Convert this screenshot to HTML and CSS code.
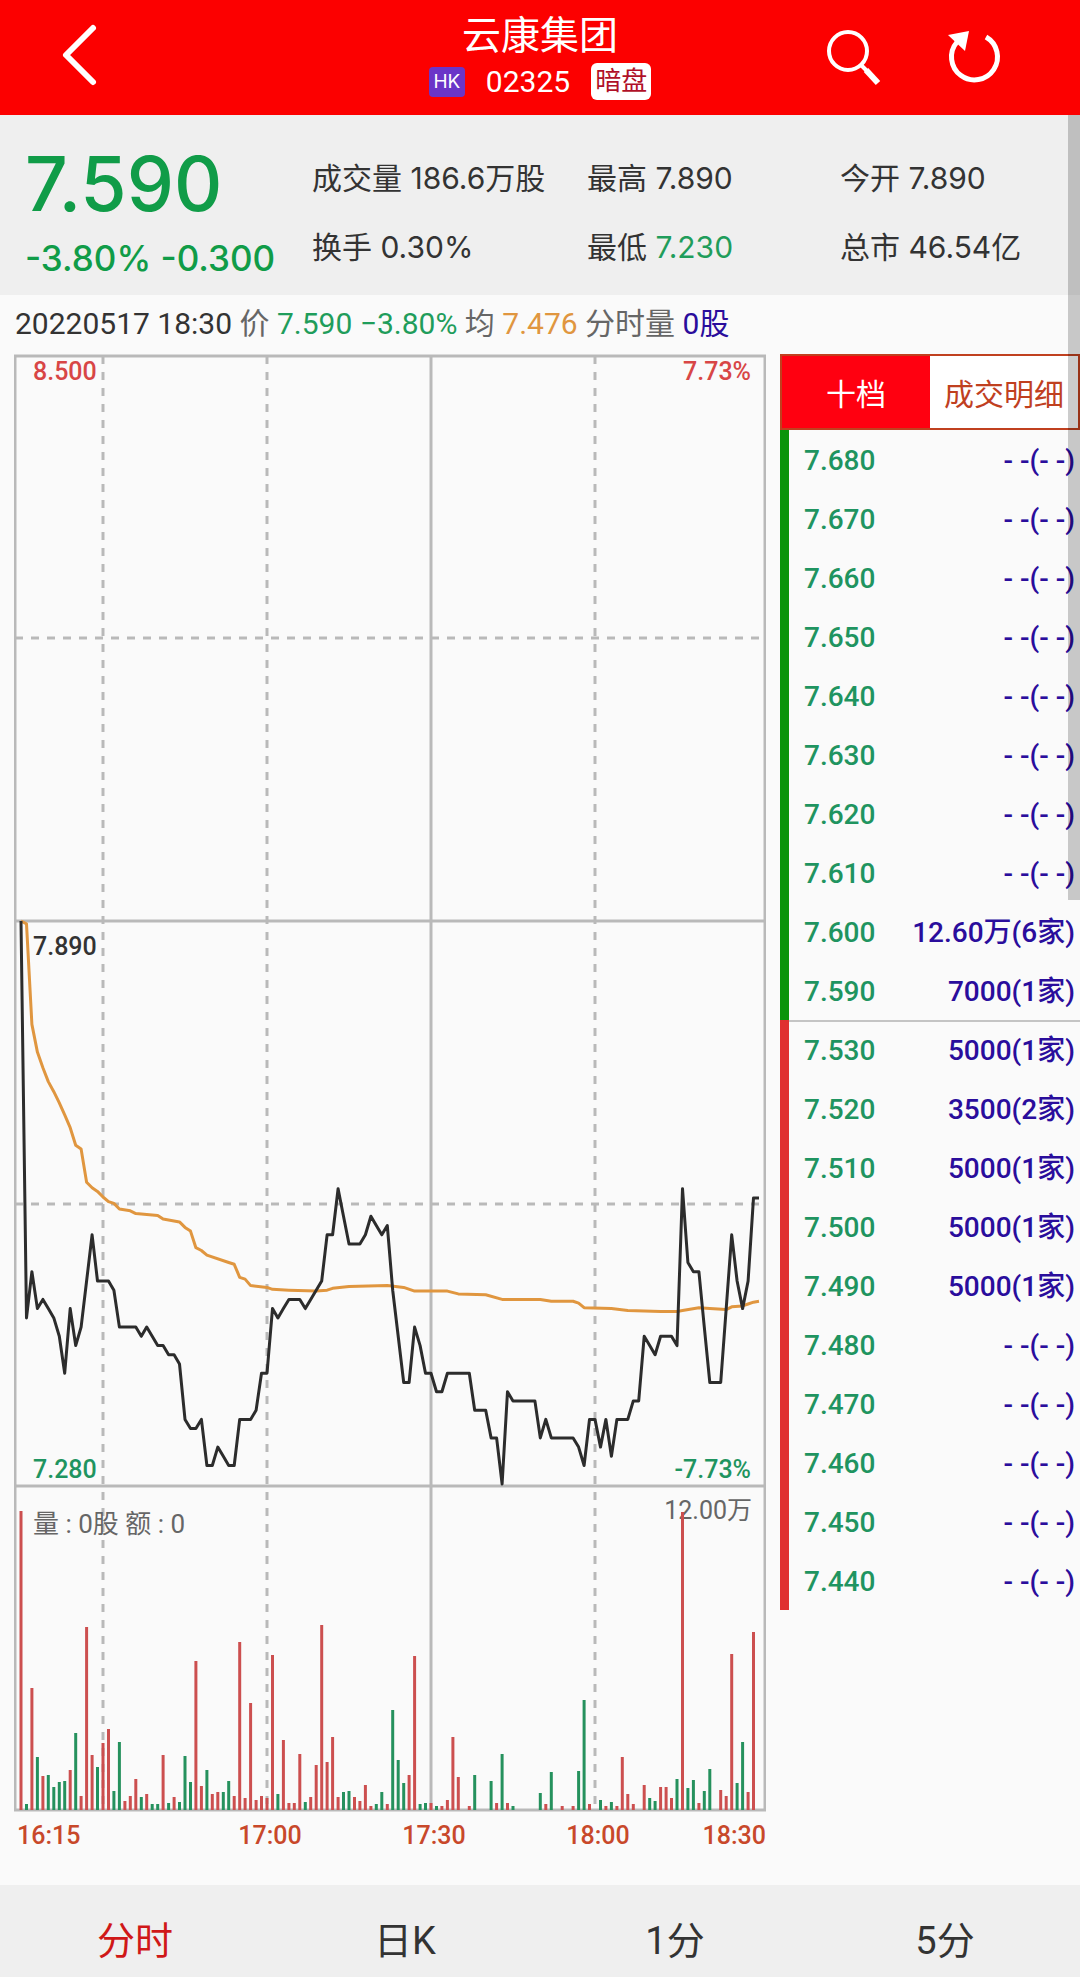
FILE: index.html
```html
<!DOCTYPE html>
<html lang="zh-CN">
<head>
    <meta charset="UTF-8">
    <meta name="viewport" content="width=device-width, initial-scale=1.0">
    <title>云康集团 02325</title>
    <link rel="stylesheet" href="styles.css">
</head>
<body>
    <header class="header">
        <button class="icon-btn" type="button" aria-label="返回">
            <svg width="40" height="72" viewBox="0 0 40 72">
                <path d="M33 6 L6 33 L33 60" fill="none" stroke="#fff" stroke-width="6" stroke-linecap="round" stroke-linejoin="round"/>
            </svg>
        </button>
        <div class="title">
            <h1>云康集团</h1>
            <div class="code-row">
                <span class="market">HK</span>
                <span class="code">02325</span>
                <span class="tag">暗盘</span>
            </div>
        </div>
        <div class="actions">
            <button class="icon-btn" type="button" aria-label="搜索">
                <svg width="60" height="60" viewBox="0 0 60 60">
                    <circle cx="25" cy="23" r="19" fill="none" stroke="#fff" stroke-width="4"/>
                    <path d="M38 37 L44 43" stroke="#fff" stroke-width="4"/>
                    <path d="M43 42 L55 55" stroke="#fff" stroke-width="6"/>
                </svg>
            </button>
            <button class="icon-btn" type="button" aria-label="刷新">
                <svg width="60" height="60" viewBox="0 0 60 60">
                    <path d="M41 9 A23 23 0 1 1 12 14" fill="none" stroke="#fff" stroke-width="5"/>
                    <path d="M3 7 L24 3 L20 23 Z" fill="#fff"/>
                </svg>
            </button>
        </div>
    </header>

    <main class="content">
        <div class="scroll-thumb"></div>

        <section class="summary">
            <div class="quote">
                <div class="price">7.590</div>
                <div class="change">-3.80% -0.300</div>
            </div>
            <div class="stats">
                <div>成交量 186.6万股</div>
                <div>最高 7.890</div>
                <div>今开 7.890</div>
                <div>换手 0.30%</div>
                <div>最低 <span class="green">7.230</span></div>
                <div>总市 46.54亿</div>
            </div>
        </section>

        <div class="info">
            20220517 18:30 <span class="gray">价</span> <span class="green">7.590 −3.80%</span> <span class="gray">均</span> <span class="orange">7.476</span> <span class="gray">分时量</span> <span class="blue">0股</span>
        </div>

        <div class="board">
            <svg class="chart" viewBox="0 0 752 1500">
                <g class="grid">
                    <path d="M1 2 H751 V1456 H1 Z M1 567 H751 M1 1132 H751 M417 2 V1456"/>
                    <path class="dash" d="M89 2 V1456 M253 2 V1456 M581 2 V1456 M1 284 H751 M1 850 H751"/>
                </g>
                <g class="label">
                    <text class="up" x="19" y="26">8.500</text>
                    <text class="up end" x="737" y="26">7.73%</text>
                    <text x="19" y="601">7.890</text>
                    <text class="down" x="19" y="1124">7.280</text>
                    <text class="down end" x="737" y="1124">-7.73%</text>
                    <text class="muted total" x="19" y="1179">量 : 0股 额 : 0</text>
                    <text class="muted end" x="738" y="1165">12.00万</text>
                </g>
                <g id="volume"></g>
                <polyline id="average" class="line average"/>
                <polyline id="price" class="line"/>
                <g class="label axis">
                    <text x="3" y="1490">16:15</text>
                    <text class="middle" x="256" y="1490">17:00</text>
                    <text class="middle" x="420" y="1490">17:30</text>
                    <text class="middle" x="584" y="1490">18:00</text>
                    <text class="end" x="752" y="1490">18:30</text>
                </g>
            </svg>

            <aside class="depth">
                <div class="tabs">
                    <button class="tab active" type="button">十档</button>
                    <button class="tab" type="button">成交明细</button>
                </div>
                <table class="orders">
                    <tbody class="sell">
                        <tr><td>7.680</td><td>- -(- -)</td></tr>
                        <tr><td>7.670</td><td>- -(- -)</td></tr>
                        <tr><td>7.660</td><td>- -(- -)</td></tr>
                        <tr><td>7.650</td><td>- -(- -)</td></tr>
                        <tr><td>7.640</td><td>- -(- -)</td></tr>
                        <tr><td>7.630</td><td>- -(- -)</td></tr>
                        <tr><td>7.620</td><td>- -(- -)</td></tr>
                        <tr><td>7.610</td><td>- -(- -)</td></tr>
                        <tr><td>7.600</td><td>12.60万(6家)</td></tr>
                        <tr><td>7.590</td><td>7000(1家)</td></tr>
                    </tbody>
                    <tbody class="buy">
                        <tr><td>7.530</td><td>5000(1家)</td></tr>
                        <tr><td>7.520</td><td>3500(2家)</td></tr>
                        <tr><td>7.510</td><td>5000(1家)</td></tr>
                        <tr><td>7.500</td><td>5000(1家)</td></tr>
                        <tr><td>7.490</td><td>5000(1家)</td></tr>
                        <tr><td>7.480</td><td>- -(- -)</td></tr>
                        <tr><td>7.470</td><td>- -(- -)</td></tr>
                        <tr><td>7.460</td><td>- -(- -)</td></tr>
                        <tr><td>7.450</td><td>- -(- -)</td></tr>
                        <tr><td>7.440</td><td>- -(- -)</td></tr>
                    </tbody>
                </table>
            </aside>
        </div>
    </main>

    <nav class="periods">
        <button class="period active" type="button">分时</button>
        <button class="period" type="button">日K</button>
        <button class="period" type="button">1分</button>
        <button class="period" type="button">5分</button>
    </nav>

    <script>
        // Ticks of 0.01 below 7.890, one per minute from 16:15
        const prices = [
            0, 43, 38, 42, 41, 42, 43, 45, 49, 42, 46, 44, 39, 34, 39, 39, 39, 40, 44, 44,
            44, 44, 45, 44, 45, 46, 46, 47, 47, 48, 54, 55, 55, 54, 59, 59, 57, 58, 59, 59,
            54, 54, 54, 53, 49, 49, 42, 43, 42, 41, 41, 41, 42, 41, 40, 39, 34, 34, 29, 32,
            35, 35, 35, 34, 32, 33, 34, 33, 40, 45, 50, 50, 44, 46, 49, 49, 51, 51, 49, 49,
            49, 49, 49, 53, 53, 53, 56, 56, 61, 51, 52, 52, 52, 52, 52, 56, 54, 56, 56, 56,
            56, 56, 57, 59, 54, 54, 57, 54, 58, 54, 54, 54, 52, 52, 45, 46, 47, 45, 45, 45,
            46, 29, 37, 38, 38, 44, 50, 50, 50, 42, 34, 39, 42, 39, 30, 30
        ];

        // [minute, ticks below 7.890]
        const averages = [
            [0, 0], [1, 0.3], [2, 11.2], [3, 14.2], [4, 15.9], [5, 17.4], [6, 18.5], [7, 19.7],
            [8, 21], [9, 22.4], [10, 24.3], [11, 24.7], [12, 28.3], [13, 28.9], [14, 29.3],
            [15, 29.9], [16, 30.4], [17, 30.6], [18, 31.2], [20, 31.4], [21, 31.7], [25, 31.9],
            [26, 32.3], [29, 32.6], [30, 33.2], [31, 33.6], [32, 35.4], [33, 35.7], [34, 36.2],
            [38, 37], [39, 37.2], [40, 38.6], [41, 38.8], [42, 39.5], [45, 39.7], [46, 39.9],
            [49, 40], [54, 40.1], [56, 40], [57, 39.8], [60, 39.6], [67, 39.5], [70, 39.7],
            [72, 40.1], [78, 40.1], [80, 40.4], [85, 40.5], [88, 41], [95, 41], [97, 41.2],
            [101, 41.2], [102, 41.4], [103, 41.9], [108, 42], [111, 42.2], [117, 42.3],
            [120, 42.3], [121, 42.2], [124, 41.9], [126, 42], [129, 42.1], [130, 41.8],
            [132, 41.7], [133, 41.5], [134, 41.3], [135, 41.2]
        ];

        // Bar heights: positive is red, negative is green
        const volumes = [
            299, -6, 122, -53, 34, -35, -23, -28, -29, 40, -77, 14, 183, 55, -43, 67, 81, -19, -68, 9,
            14, 31, -13, 16, -6, -6, 55, -7, 13, -8, -54, -28, 149, 24, -40, 16, 18, -18, -29, 14,
            168, 12, 107, 10, 14, 12, 155, -16, 70, 7, 7, 56, -8, 13, 45, 185, 48, 73, 13, -18,
            -19, 13, 9, 25, 4, -6, -18, 6, -100, -50, -27, 35, 154, -6, -7, 7, -4, 4, 10, 73,
            33, 0, 4, -35, 0, 0, -29, 7, -56, 7, -4, 0, 0, 0, 0, -17, 6, -38, 0, 4,
            0, 4, -39, -110, 6, 0, -10, 4, -8, 4, 53, 16, 6, 0, 25, -12, -9, 23, 23, 12,
            -31, 298, -22, -30, 7, -19, -41, 0, 20, 14, 156, -27, -68, 18, 178
        ];

        const toX = (minute) => 7 + minute * 738 / 135;
        const toY = (ticks) => 567 + ticks * 563 / 61;
        const toPoints = (list) => list.map(([m, t]) => `${toX(m).toFixed(1)},${toY(t).toFixed(1)}`).join(' ');

        document.getElementById('price').setAttribute('points', toPoints(prices.map((t, m) => [m, t])));
        document.getElementById('average').setAttribute('points', toPoints(averages));

        document.getElementById('volume').innerHTML = volumes.map((v, m) => {
            if (!v) return '';
            return `<path class="bar ${v > 0 ? 'rise' : 'fall'}" d="M${toX(m).toFixed(1)} 1456 v${-Math.abs(v)}"/>`;
        }).join('');
    </script>
</body>
</html>
```

FILE: styles.css
```css
* {
    box-sizing: border-box;
}

body {
    margin: 0;
    min-height: 100vh;
    display: flex;
    flex-direction: column;
    background: #fafafa;
    color: #333;
    font-family: Roboto, "Noto Sans CJK SC", sans-serif;
    font-size: 30px;
}

button {
    margin: 0;
    padding: 0;
    border: 0;
    background: none;
    color: inherit;
    font: inherit;
}

.green {
    color: #1f9d5b;
}

.gray {
    color: #666;
}

.orange {
    color: #e0963f;
}

.blue {
    color: #2a0d9c;
}

.header {
    height: 115px;
    padding: 0 60px;
    display: grid;
    grid-template-columns: 1fr auto 1fr;
    align-items: center;
    background: #fc0000;
    color: #fff;
}

.icon-btn {
    display: flex;
    justify-self: start;
}

.title {
    display: flex;
    flex-direction: column;
    align-items: center;
    gap: 6px;
}

.title h1 {
    margin: 0;
    font-size: 39px;
    font-weight: 400;
    line-height: 42px;
}

.code-row {
    display: flex;
    align-items: center;
    gap: 21px;
    line-height: 38px;
}

.market {
    width: 36px;
    border-radius: 4px;
    background: #6a35c8;
    font-family: Inter, sans-serif;
    font-size: 19px;
    line-height: 30px;
    text-align: center;
}

.tag {
    padding: 0 4px;
    border-radius: 6px;
    background: #fff;
    color: #b01028;
    font-size: 26px;
    line-height: 37px;
}

.actions {
    margin-right: 15px;
    display: flex;
    justify-content: flex-end;
    gap: 62px;
}

.content {
    position: relative;
    flex: 1;
}

.scroll-thumb {
    position: absolute;
    top: 0;
    right: 0;
    z-index: 1;
    width: 12px;
    height: 785px;
    background: rgba(0, 0, 0, 0.2);
}

.summary {
    height: 180px;
    padding: 0 36px 0 25px;
    display: flex;
    background: #efefef;
    font-family: Inter, "Noto Sans CJK SC", sans-serif;
}

.quote {
    width: 287px;
    padding-top: 27px;
    flex: none;
    color: #109c48;
    font-weight: 500;
    white-space: nowrap;
}

.price {
    font-size: 75px;
    line-height: 84px;
}

.change {
    font-size: 35px;
    line-height: 64px;
}

.stats {
    flex: 1;
    padding-top: 29px;
    display: grid;
    grid-template-columns: 275fr 253fr 204fr;
    grid-auto-rows: 69px;
    font-size: 30px;
    line-height: 69px;
    white-space: nowrap;
}

.info {
    height: 59px;
    padding: 0 15px;
    line-height: 57px;
    white-space: nowrap;
}

.board {
    display: flex;
    align-items: flex-start;
    gap: 14px;
    padding-left: 14px;
}

.chart {
    flex: 1;
    min-width: 0;
    display: block;
}

.grid path {
    fill: none;
    stroke: #b9b9b9;
    stroke-width: 3;
}

.grid .dash {
    stroke-dasharray: 8 8;
}

.label {
    fill: #333;
    font-size: 25px;
    font-weight: 500;
}

.label .up {
    fill: #d84646;
}

.label .down {
    fill: #1f9460;
}

.label .muted {
    fill: #666;
    font-weight: 400;
}

.label .total {
    font-size: 26px;
}

.label .middle {
    text-anchor: middle;
}

.label .end {
    text-anchor: end;
}

.axis {
    fill: #c8482a;
}

.line {
    fill: none;
    stroke: #2c2c2c;
    stroke-width: 3;
    stroke-linejoin: round;
}

.average {
    stroke: #e0963f;
}

.bar {
    stroke-width: 3;
}

.rise {
    stroke: #cc4f4f;
}

.fall {
    stroke: #25915d;
}

.depth {
    width: 300px;
    flex: none;
}

.tabs {
    height: 76px;
    display: flex;
    border: 2px solid #c0401f;
    background: #fff;
    color: #c0401f;
}

.tab {
    flex: 1;
}

.tab.active {
    background: #ff0010;
    color: #fff;
}

.orders {
    width: 100%;
    border-spacing: 0;
    font-size: 28px;
    font-weight: 500;
    line-height: 57px;
}

.orders td {
    padding: 2px 0 0;
    color: #1f9460;
    white-space: nowrap;
}

.orders td:first-child {
    padding-left: 15px;
    border-left: 9px solid #0a940a;
}

.orders td:last-child {
    padding-right: 5px;
    color: #2a0d9c;
    text-align: right;
}

.orders .buy td:first-child {
    border-left-color: #e03030;
}

.buy tr:first-child td {
    box-shadow: inset 0 2px #c4c4c4;
}

.periods {
    height: 92px;
    padding-top: 12px;
    display: flex;
    background: #efefef;
    font-size: 38px;
}

.period {
    flex: 1;
}

.period.active {
    color: #d01818;
}
```
